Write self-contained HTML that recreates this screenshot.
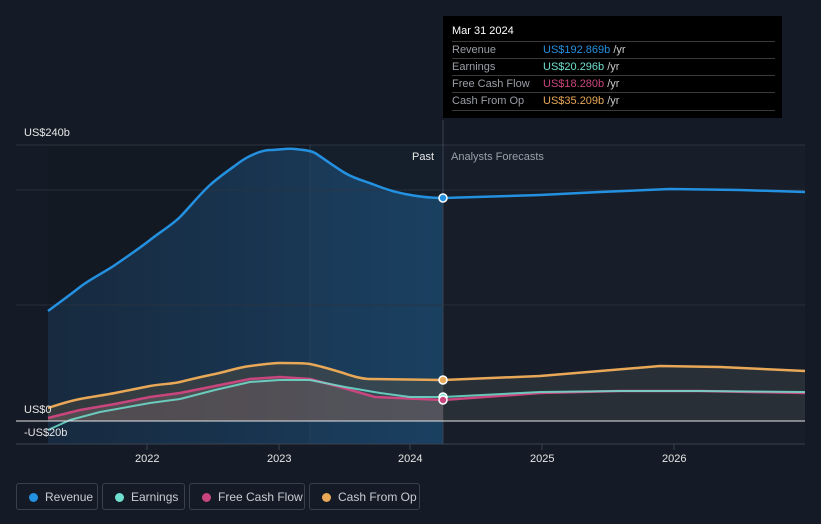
<!DOCTYPE html><html><head><style>
body{margin:0;width:821px;height:524px;background:#151b26;font-family:"Liberation Sans",sans-serif;overflow:hidden;position:relative}
.tt{position:absolute;left:443px;top:16px;width:339px;height:102px;background:#000;color:#fff;font-size:11px}
.tt .h{position:absolute;left:9px;top:9px;font-size:11px}
.row{position:absolute;left:9px;width:323px;border-top:1px solid #3a3a3a;height:17px;line-height:17px;color:#9a9ea6}
.row span{position:absolute;left:91px}
.row i{font-style:normal;color:#ccc}
.leg{position:absolute;top:483px;height:27px;border:1px solid #3a414d;border-radius:3px;color:#c8ccd2;font-size:12px;line-height:27px;box-sizing:border-box}
.leg b{position:absolute;left:12px;top:9px;width:9px;height:9px;border-radius:50%}
.leg span{position:absolute;left:28px}
</style></head><body>
<svg width="821" height="524" style="position:absolute;left:0;top:0" font-family="Liberation Sans" font-size="11">
<defs><linearGradient id="g" x1="0" y1="0" x2="1" y2="0"><stop offset="0" stop-color="#172a3f"/><stop offset="1" stop-color="#1a3d5e"/></linearGradient></defs>
<rect x="48" y="145" width="395" height="299" fill="#131923"/>
<rect x="443" y="145" width="362" height="299" fill="#171e2a"/>
<path d="M48,311 C60,302 70,295 80,287 S105,272 115,265 S140,248 150,240 S172,225 180,217 S200,194 210,185 S232,168 240,162 S262,150 270,150 S288,148 295,149 S310,150 315,153 S335,167 345,173 S365,181 375,185 S395,192 405,194 S430,198 443,198 L443,444 L48,444Z" fill="url(#g)"/>
<rect x="310" y="145" width="133" height="299" fill="#2a6090" opacity=".08"/>
<line x1="310" y1="145" x2="310" y2="444" stroke="#24405a"/>
<line x1="16" y1="145" x2="805" y2="145" stroke="#2c3340"/>
<line x1="16" y1="190" x2="805" y2="190" stroke="#2c3340" opacity=".8"/>
<line x1="16" y1="305" x2="805" y2="305" stroke="#2c3340" opacity=".8"/>
<line x1="443" y1="120" x2="443" y2="444" stroke="#3a4350"/>
<path d="M48,311 C60,302 70,295 80,287 S105,272 115,265 S140,248 150,240 S172,225 180,217 S200,194 210,185 S232,168 240,162 S262,150 270,150 S288,148 295,149 S310,150 315,153 S335,167 345,173 S365,181 375,185 S395,192 405,194 S430,198 443,198 L540,195 L600,192 L670,189 L740,190 L805,192" fill="none" stroke="#2490e0" stroke-width="2.5"/>
<path d="M48,408 L80,399 L115,393 L150,386 L180,382 L215,374 L250,366 L280,363 L310,364 L340,372 L370,379 L443,380 L443,421 L48,421Z" fill="#6b5a3a" opacity=".35"/>
<path d="M48,418 L80,410 L115,404 L150,397 L180,393 L215,386 L250,379 L280,377 L310,379 L340,387 L375,397 L443,400 L443,421 L48,421Z" fill="#8a6a70" opacity=".35"/>
<path d="M443,380 L540,376 L600,371 L660,366 L720,367 L805,371 L805,421 L443,421Z" fill="#333a40" opacity=".6"/>
<path d="M48,408 C60,404 70,401 80,399 S105,395 115,393 S140,388 150,386 S172,384 180,382 S205,376 215,374 S240,367 250,366 S270,363 280,363 S305,363 310,364 S330,369 340,372 S360,379 370,379 L443,380 L540,376 L600,371 L660,366 L720,367 L805,371" fill="none" stroke="#e8a857" stroke-width="2.5"/>
<path d="M48,418 L80,410 L115,404 L150,397 L180,393 L215,386 L250,379 L280,377 L310,379 L340,387 L375,397 L443,400 L540,393 L620,391 L700,391 L805,393" fill="none" stroke="#c8467d" stroke-width="2.5" stroke-linejoin="round"/>
<path d="M48,430 L70,420 L100,412 L150,403 L180,399 L215,390 L250,382 L280,380 L310,380 L345,387 L380,393 L410,397 L443,397 L540,392 L620,391 L700,391 L805,392" fill="none" stroke="#6fe0cf" stroke-width="2" stroke-linejoin="round" opacity=".85"/>
<line x1="16" y1="421" x2="805" y2="421" stroke="#e6e6e6"/>
<rect x="16" y="422" width="32" height="22" fill="#151b26"/>
<line x1="16" y1="444" x2="805" y2="444" stroke="#3a4350"/>
<g stroke="#3a4350"><line x1="147" y1="444" x2="147" y2="450"/><line x1="279" y1="444" x2="279" y2="450"/><line x1="410" y1="444" x2="410" y2="450"/><line x1="542" y1="444" x2="542" y2="450"/><line x1="674" y1="444" x2="674" y2="450"/></g>
<circle cx="443" cy="198" r="4" fill="#2490e0" stroke="#fff" stroke-width="1.5"/>
<circle cx="443" cy="380" r="4" fill="#e8a857" stroke="#fff" stroke-width="1.5"/>
<circle cx="443" cy="397" r="4" fill="#6fe0cf" stroke="#fff" stroke-width="1.5"/>
<circle cx="443" cy="400" r="4" fill="#c8467d" stroke="#fff" stroke-width="1.5"/>
<g fill="#e6e6e6"><text x="24" y="136">US$240b</text><text x="24" y="413">US$0</text><text x="24" y="436">-US$20b</text>
<text x="135" y="462">2022</text><text x="267" y="462">2023</text><text x="398" y="462">2024</text><text x="530" y="462">2025</text><text x="662" y="462">2026</text>
<text x="412" y="160">Past</text></g>
<text x="451" y="160" fill="#9aa0a8">Analysts Forecasts</text>
</svg>
<div class="tt"><div class="h">Mar 31 2024</div>
<div class="row" style="top:25px">Revenue<span><b style="font-weight:normal;color:#2490e0">US$192.869b</b> <i>/yr</i></span></div>
<div class="row" style="top:42px">Earnings<span><b style="font-weight:normal;color:#6fe0cf">US$20.296b</b> <i>/yr</i></span></div>
<div class="row" style="top:59px">Free Cash Flow<span><b style="font-weight:normal;color:#c8467d">US$18.280b</b> <i>/yr</i></span></div>
<div class="row" style="top:76px;border-bottom:1px solid #3a3a3a">Cash From Op<span><b style="font-weight:normal;color:#e8a857">US$35.209b</b> <i>/yr</i></span></div>
</div>
<div class="leg" style="left:16px;width:82px"><b style="background:#2490e0"></b><span>Revenue</span></div>
<div class="leg" style="left:102px;width:83px"><b style="background:#6fe0cf"></b><span>Earnings</span></div>
<div class="leg" style="left:189px;width:116px"><b style="background:#c8467d"></b><span>Free Cash Flow</span></div>
<div class="leg" style="left:309px;width:111px"><b style="background:#e8a857"></b><span>Cash From Op</span></div>
</body></html>
